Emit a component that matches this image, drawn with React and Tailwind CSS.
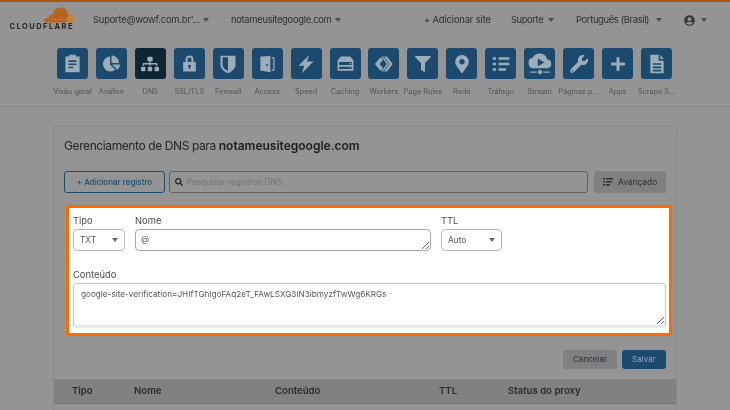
import React from "react";
import { FaChartPie, FaSitemap, FaMapMarkerAlt, FaWrench, FaPlus, FaSearch, FaUserCircle, FaFilter } from "react-icons/fa";

const glyph = "#9dadb7";

const Overview = () => (
    <svg viewBox="0 0 24 24" width="19" height="19" fill={glyph}>
        <path fillRule="evenodd" d="M8 1h8v2h5v20H3V3h5zM7 8v2h10V8zm0 4v2h10v-2zm0 4v2h6v-2z" />
    </svg>
);
const Lock = () => (
    <svg viewBox="0 0 24 24" width="19" height="19" fill={glyph}>
        <path fillRule="evenodd" d="M7 10V7a5 5 0 0 1 10 0v3h3v12H4V10zm2.500 0h5V7a2.500 2.500 0 0 0-5 0zM12 13.500a1.800 1.800 0 0 0-.8 3.400V19h1.600v-2.100a1.800 1.800 0 0 0-.8-3.400z" />
    </svg>
);
const Shield = () => (
    <svg viewBox="0 0 24 24" width="20" height="20" fill={glyph}>
        <path fillRule="evenodd" d="M3 2h18v11c0 5-4 8-9 10-5-2-9-5-9-10zm9 2H5.500v9c0 3.400 3 5.800 6.500 7.300z" />
    </svg>
);
const Door = () => (
    <svg viewBox="0 0 24 24" width="20" height="20" fill={glyph}>
        <path fillRule="evenodd" d="M4 3h2l10-1v20L6 20H4zm8 9a1.200 1.200 0 1 0 .01 0zM17.500 4H21v16h-3.500v-1.500H19.500v-13h-2z" />
    </svg>
);
const Bolt = () => (
    <svg viewBox="0 0 24 24" width="20" height="20" fill={glyph}>
        <path d="M16 1 3 14h7l-3 9 14-14h-8z" />
    </svg>
);
const Storage = () => (
    <svg viewBox="0 0 24 24" width="19" height="19" fill={glyph}>
        <path fillRule="evenodd" d="M6 3h12l4 5v13H2V8zm-2 7v4h16v-4zm0 6v3h16v-3zm13-4.500h2v1h-2zm0 5.500h2v1h-2z" />
    </svg>
);
const Workers = () => (
    <svg viewBox="0 0 24 24" width="20" height="20" fill={glyph}>
        <path d="M8 4 1 12l7 8 3-3-4.500-5L11 7zM12 3h3.500l7 9-7 9H12l7-9zM9 3h2l7 9-7 9H9l6.500-9z" />
    </svg>
);
const Traffic = () => (
    <svg viewBox="0 0 24 24" width="20" height="20" fill={glyph}>
        <path d="M2 4h4v3H2zm7 0h13v3H9zM2 10.500h4v3H2zm7 0h13v3H9zM2 17h4v3H2zm7 0h9v3H9z" />
    </svg>
);
const Stream = () => (
    <svg viewBox="0 0 24 24" width="26" height="26" fill={glyph}>
        <path fillRule="evenodd" d="M6 16a5 5 0 0 1-.500-9.900 7 7 0 0 1 13 1.400A4.300 4.300 0 0 1 19 16zm4-9v7l6-3.500z" />
        <path d="M3 19h6v1H3zm12 0h6v1h-6z" />
        <circle cx="12" cy="19.500" r="2" />
    </svg>
);
const FileDoc = () => (
    <svg viewBox="0 0 24 24" width="20" height="20" fill={glyph}>
        <path fillRule="evenodd" d="M4 1h10v7h6v15H4zm12 0 4 5h-4zM7 11v2h10v-2zm0 4v2h10v-2zm0 4v2h10v-2z" />
    </svg>
);
const ListIcon = () => (
    <svg viewBox="0 0 10 8" width="10" height="8" fill="#2e2e2e">
        <path d="M0 0h2v1.500H0zm3 0h7v1.500H3zM0 3h2v1.500H0zm3 0h6v1.500H3zM0 6h2v1.500H0zm3 0h4v1.500H3z" />
    </svg>
);

const navItems = [
    { label: "Visão geral", icon: <Overview /> },
    { label: "Análise", icon: <FaChartPie size={17} color={glyph} /> },
    { label: "DNS", icon: <FaSitemap size={18} color={glyph} />, active: true },
    { label: "SSL/TLS", icon: <Lock /> },
    { label: "Firewall", icon: <Shield /> },
    { label: "Access", icon: <Door /> },
    { label: "Speed", icon: <Bolt /> },
    { label: "Caching", icon: <Storage /> },
    { label: "Workers", icon: <Workers /> },
    { label: "Page Rules", icon: <FaFilter size={16} color={glyph} /> },
    { label: "Rede", icon: <FaMapMarkerAlt size={18} color={glyph} /> },
    { label: "Tráfego", icon: <Traffic /> },
    { label: "Stream", icon: <Stream /> },
    { label: "Páginas p...", icon: <FaWrench size={18} color={glyph} /> },
    { label: "Apps", icon: <FaPlus size={16} color={glyph} /> },
    { label: "Scrape S...", icon: <FileDoc /> },
];

const Caret = ({ className = "border-t-[#4c4c4c]" }) => (
    <span className={`inline-block w-0 h-0 border-x-[3.500px] border-x-transparent border-t-[4px] ${className}`} />
);

const Logo = () => (
    <div className="flex flex-col items-end w-[64px] ml-[10px] mt-[-2px]">
        <svg width="33" height="16" viewBox="0 0 33 16" className="mr-[-1px]">
            <path d="M4 15.500c-2-.5-2.500-3-1-4 1-.7 2.200-.6 3-.2C7 8 9 7 10.500 7.500 11.500 3 15 .5 18.500.5c4 0 6.500 2.500 7.500 6L25 15.500z" fill="#b5651d" />
            <path d="M26 15.500c.5-2 .3-3.500-.8-4.700 1-1.500 1.300-2.500 1.300-3.500 3-.5 6 2 6 6.500 0 .7-.1 1.200-.2 1.700z" fill="#c58236" />
            <path d="M9 12.300h16.500v.7H9z" fill="#8d8d8d" />
        </svg>
        <span className="text-[7.500px] leading-[8px] font-bold tracking-[1.450px] text-[#262626] whitespace-nowrap">CLOUDFLARE</span>
    </div>
);

const Header = () => (
    <div className="flex items-center h-[36px] text-[9.400px] tracking-[-0.3px] text-[#2e2e2e]">
        <Logo />
        <span className="ml-[19px] w-[104px] tracking-[-0.2px] whitespace-nowrap">Suporte@wowf.com.br'...</span>
        <span className="ml-[6px] flex"><Caret /></span>
        <span className="ml-[22px] w-[100px] whitespace-nowrap">notameusitegoogle.com</span>
        <span className="ml-[4px] flex"><Caret /></span>
        <span className="ml-[83px] w-[67px] tracking-[-0.15px] whitespace-nowrap">+ Adicionar site</span>
        <span className="ml-[20px] w-[33px] tracking-[-0.4px] whitespace-nowrap">Suporte</span>
        <span className="ml-[4px] flex"><Caret /></span>
        <span className="ml-[22px] w-[74px] tracking-[-0.35px] whitespace-nowrap">Português (Brasil)</span>
        <span className="ml-[6px] flex"><Caret /></span>
        <span className="ml-[22px] flex"><FaUserCircle size={11} color="#3a3a3a" /></span>
        <span className="ml-[6px] flex"><Caret /></span>
    </div>
);

const NavBar = () => (
    <div className="flex pl-[53px] pt-[10px] h-[69px] border-b border-[#8a8a8a]">
        {navItems.map((item) => (
            <div key={item.label} className="w-[38.950px] flex flex-col items-center">
                <div className={`w-[31px] h-[31px] shrink-0 rounded-[3px] flex items-center justify-center ${item.active ? "bg-[#0e2532]" : "bg-[#1b4a6e]"}`}>
                    {item.icon}
                </div>
                <span className="mt-[8px] text-[7.300px] leading-[10px] text-[#525252] whitespace-nowrap">{item.label}</span>
            </div>
        ))}
    </div>
);

const Field = ({ label, className = "", children }) => (
    <div className={`flex flex-col ${className}`}>
        <label className="text-[9.400px] leading-[12px] text-[#4a4a4a] mb-[2px]">{label}</label>
        {children}
    </div>
);

const FakeSelect = ({ value, width }) => (
    <div className={`${width} h-[22px] px-[6px] flex items-center justify-between rounded-[4px] border border-[#b5b5b5] text-[8.300px] text-[#555]`}>
        <span>{value}</span>
        <Caret className="border-t-[#666]" />
    </div>
);

const DnsPanel = () => (
    <div className="mx-[53px] mt-[19px] border border-[#8a8a8a] rounded-t-[4px]">
        <h1 className="pl-[10px] pt-[10px] h-[44px] text-[12px] tracking-[-0.4px] leading-[17px] text-[#252525]">
            Gerenciamento de DNS para <b className="font-semibold tracking-normal text-[#1c1c1c]">notameusitegoogle.com</b>
        </h1>
        <div className="flex h-[22px] pl-[10px] pr-[10px]">
            <button className="w-[101px] rounded-[3px] border border-[#1b4a6e] text-[8px] font-medium text-[#1b4a6e]">+ Adicionar registro</button>
            <div className="ml-[4px] w-[420px] flex items-center gap-[4px] pl-[5px] rounded-[3px] border border-[#606060] text-[8.300px] text-[#747474]">
                <FaSearch size={8} color="#222" />
                <span>Pesquisar registros DNS</span>
            </div>
            <button className="ml-[6px] w-[72px] flex items-center justify-center gap-[5px] rounded-[3px] bg-[#7f8081] text-[8.400px] text-[#2e2e2e]">
                <ListIcon />
                Avançado
            </button>
        </div>
        <div className="ml-[12px] mr-[4px] mt-[12px] h-[131px] border-[3px] border-[#ff6a00] bg-white px-[4px] pt-[7px]">
            <div className="flex">
                <Field label="Tipo" className="w-[52px]"><FakeSelect value="TXT" width="w-[52px]" /></Field>
                <Field label="Nome" className="ml-[10px] w-[296px]">
                    <textarea defaultValue="@" className="block w-[296px] h-[22px] min-h-[22px] px-[5px] py-[3px] rounded-[4px] border border-[#a9a9a9] text-[8.300px] leading-[12px] text-[#555] outline-none" />
                </Field>
                <Field label="TTL" className="ml-[10px] w-[61px]"><FakeSelect value="Auto" width="w-[61px]" /></Field>
            </div>
            <Field label="Conteúdo" className="mt-[18px]">
                <textarea
                    defaultValue="google-site-verification=JHIfTGhIgoFAq2eT_FAwLSXG3IN3ibmyzfTwWg6KRGs"
                    className="block w-[593px] h-[45px] px-[7px] py-[4px] rounded-[4px] border border-[#c4c4c4] border-b-[3px] border-b-[#e8e8e8] text-[8.200px] leading-[12px] text-[#555] outline-none"
                />
            </Field>
        </div>
        <div className="flex justify-end gap-[5px] pr-[10px] mt-[14px] h-[19px]">
            <button className="w-[54px] rounded-[3px] bg-[#7f8081] text-[8.100px] text-[#2e2e2e]">Cancelar</button>
            <button className="w-[44px] rounded-[3px] bg-[#1b4a6e] text-[8.100px] text-[#94a6b3]">Salvar</button>
        </div>
        <div className="flex items-center mt-[10px] h-[25px] bg-[#7f8280] border-b border-[#6f7270] text-[9.600px] font-semibold text-[#2a2a2a]">
            <span className="ml-[18px] w-[62px]">Tipo</span>
            <span className="w-[141px]">Nome</span>
            <span className="w-[164px]">Conteúdo</span>
            <span className="w-[69px]">TTL</span>
            <span>Status do proxy</span>
        </div>
        <div className="h-[20px]" />
    </div>
);

const App = () => (
    <div className="w-[730px] h-[410px] overflow-hidden bg-[#949494] font-['Inter',sans-serif] blur-[0.3px]">
        <div className="h-[2px] bg-[#a8590f]" />
        <Header />
        <NavBar />
        <DnsPanel />
    </div>
);

export default App;
